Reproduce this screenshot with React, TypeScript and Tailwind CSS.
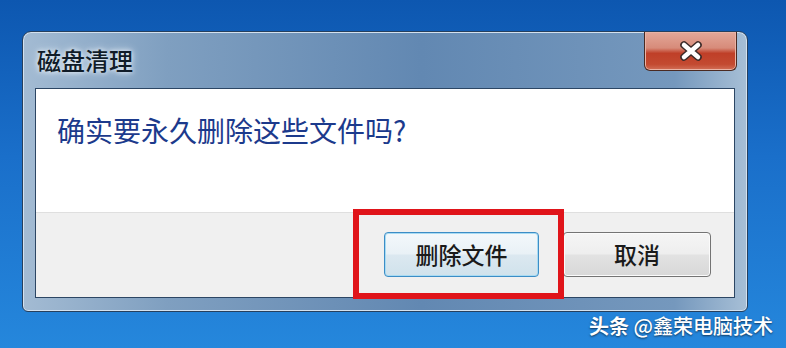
import React from 'react'

const cjk = { fontFamily: '"Noto Sans CJK SC", "Noto Sans", sans-serif' }

function CloseGlyph() {
  return (
    <svg width="26" height="20" viewBox="0 0 26 20">
      <path d="M6 4 L20 16 M20 4 L6 16" stroke="#3a2a28" strokeWidth="7.5" strokeLinecap="round" />
      <path d="M6 4 L20 16 M20 4 L6 16" stroke="#ffffff" strokeWidth="4.5" strokeLinecap="round" />
    </svg>
  )
}

function Button({ label, focused }: { label: string; focused?: boolean }) {
  return (
    <button
      className={
        'flex h-[45px] items-center justify-center rounded-[4px] border text-[23px] font-medium text-[#1a1a1a] ' +
        (focused
          ? 'w-[155px] border-[#3c8dc6] bg-[linear-gradient(#f3f8fb_0%,#e9f1f6_48%,#dbe8f0_52%,#d0e2ec_100%)] shadow-[inset_0_0_0_1px_#a8dbf3]'
          : 'w-[148px] border-[#747474] bg-[linear-gradient(#f5f5f5_0%,#eeeeee_48%,#e2e2e2_52%,#d8d8d8_100%)] shadow-[inset_0_0_0_1px_#fbfbfb]')
      }
      style={cjk}
    >
      {label}
    </button>
  )
}

export default function App() {
  return (
    <div
      className="relative h-[348px] w-[786px] overflow-hidden bg-[linear-gradient(180deg,#0d57b0_0%,#1a6fca_45%,#2587dc_100%)]"
      style={cjk}
    >
      <div className="pl-[22px] pt-[31px]">
        {/* window */}
        <div className="relative flex h-[281px] w-[726px] flex-col rounded-t-[9px] rounded-b-[6px] border border-[#26405e] bg-[linear-gradient(90deg,#a3bbd3_0%,#7f9fc0_20%,#6288b2_55%,#7598bd_90%,#a7bfd6_100%)] shadow-[inset_0_0_0_1px_#d4e1ee]">
          {/* title bar */}
          <div className="flex h-[56px] items-start justify-between">
            <div className="pl-[14px] pt-[13px] text-[24px] font-medium leading-[30px] text-[#101c28] [text-shadow:0_0_8px_#e6eef6,0_0_4px_#e6eef6]">
              磁盘清理
            </div>
            <div className="mr-[10px] flex h-[39px] w-[93px] items-center justify-center rounded-b-[6px] border border-t-0 border-[#4a2a22] bg-[linear-gradient(180deg,#e3a899_0%,#d78b7a_42%,#bf3f28_56%,#c34a31_85%,#d27058_100%)] shadow-[inset_0_0_0_1px_#eab4a6]">
              <CloseGlyph />
            </div>
          </div>
          {/* client area */}
          <div className="mx-[12px] mb-[13px] flex flex-1 flex-col border border-[#2c4664] bg-white">
            <div className="h-[123px] pl-[21px] pt-[24px] text-[28px] leading-[34px] text-[#1c3a8c]">
              确实要永久删除这些文件吗?
            </div>
            <div className="flex flex-1 items-start justify-end gap-[24px] border-t border-[#dfdfdf] bg-[#f0f0f0] pr-[23px] pt-[19px]">
              <Button label="删除文件" focused />
              <Button label="取消" />
            </div>
          </div>
        </div>
      </div>

      {/* annotation box */}
      <div className="absolute left-[353px] top-[209px] h-[90px] w-[211px] border-[6px] border-[#e0141a]" />

      {/* watermark */}
      <div className="absolute right-[13px] top-[313px] text-[20px] font-medium leading-[26px] text-white [text-shadow:0_1px_2px_rgba(0,0,0,0.6)]">
        <span className="font-bold">头条</span> @鑫荣电脑技术
      </div>
    </div>
  )
}
